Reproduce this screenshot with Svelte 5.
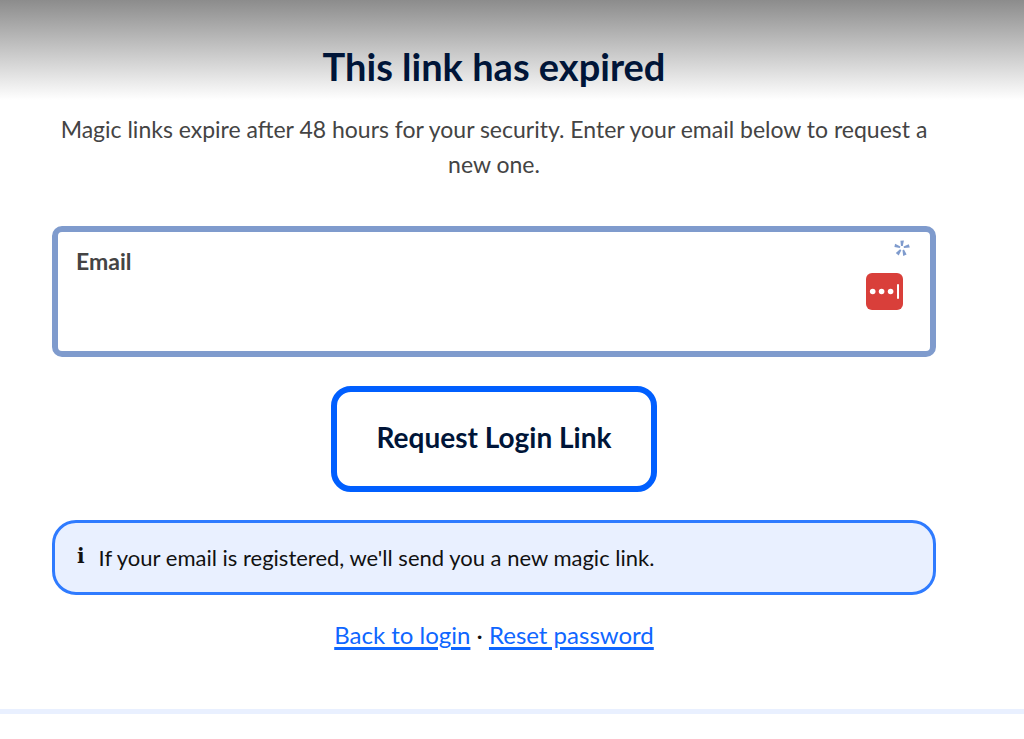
<script>
  let email = $state('');
</script>

<div class="page">
  <main>
    <h1>This link has expired</h1>
    <p class="intro">
      Magic links expire after 48 hours for your security. Enter your email below to request a new one.
    </p>

    <form onsubmit={(event) => event.preventDefault()}>
      <div class="field">
        <div class="entry">
          <label for="email">Email</label>
          <input id="email" type="email" autocomplete="email" required bind:value={email} />
        </div>
        <div class="marks">
          <svg class="required" viewBox="0 0 16 16" aria-hidden="true">
            <path d="M6.4 0.8 9.9 0.4 8.8 6 7 6Z" />
            <path d="M14.8 4.2 15.8 7.5 10 7.9 9.5 6.5Z" />
            <path d="M12.6 14.6 9.2 15.9 8.5 10.2 10 9.4Z" />
            <path d="M4.7 15.5 1.8 13.1 6 9.3 7.3 10.2Z" />
            <path d="M0.4 7.1 1.1 3.7 6.4 6.5 5.9 8Z" />
          </svg>
          <svg class="vault" viewBox="0 0 37 37" aria-hidden="true">
            <rect width="37" height="37" rx="6" fill="#d93f3a" />
            <circle cx="6.7" cy="18.5" r="2.8" fill="#fff" />
            <circle cx="15.6" cy="18.5" r="2.8" fill="#fff" />
            <circle cx="24.6" cy="18.5" r="2.8" fill="#fff" />
            <rect x="31" y="11" width="2" height="15" rx="1" fill="#fff" />
          </svg>
        </div>
      </div>
      <button type="submit">Request Login Link</button>
    </form>

    <div class="notice" role="status">
      <span class="info" aria-hidden="true">i</span>
      <span>If your email is registered, we'll send you a new magic link.</span>
    </div>

    <nav>
      <a href="#login">Back to login</a> · <a href="#reset">Reset password</a>
    </nav>
  </main>
</div>

<style>
  :global(body) {
    margin: 0;
    background: #fff;
  }

  .page {
    font-family: Lato, 'Open Sans', sans-serif;
    font-size: 24px;
    line-height: 35px;
    color: #111;
    background: linear-gradient(#8c8c8c, #fff 100px);
    border-bottom: 5px solid #e9f0ff;
  }

  main {
    display: flex;
    flex-direction: column;
    padding: 42px 88px 57px 52px;
  }

  h1 {
    margin: 0 0 22px;
    font-size: 38px;
    line-height: 48px;
    text-align: center;
    color: #001538;
  }

  .intro {
    margin: 0 0 44px;
    font-size: 23px;
    text-align: center;
    color: #444;
  }

  form {
    display: flex;
    flex-direction: column;
    align-items: center;
    gap: 29px;
    margin-bottom: 28px;
  }

  .field {
    box-sizing: border-box;
    display: flex;
    align-self: stretch;
    min-height: 131px;
    padding: 12px 20px 12px 18px;
    border: 6px solid #7f9bcd;
    border-radius: 10px;
    background: #fff;
  }

  .entry {
    flex: 1;
    display: flex;
    flex-direction: column;
  }

  label {
    font-size: 23px;
    font-weight: 700;
    color: #444;
  }

  input {
    flex: 1;
    min-width: 0;
    padding: 0;
    border: 0;
    outline: 0;
    background: none;
    font: inherit;
    color: inherit;
  }

  .marks {
    display: flex;
    flex-direction: column;
    align-items: flex-start;
    width: 44px;
    gap: 17px;
    margin-top: -4px;
  }

  .required {
    align-self: flex-end;
    width: 16px;
    height: 16px;
    fill: #7f9bcd;
  }

  .vault {
    width: 37px;
    height: 37px;
  }

  button {
    padding: 30px 40px 34px;
    border: 6px solid #005fff;
    border-radius: 20px;
    background: #fff;
    font: 700 28px/30px Lato, 'Open Sans', sans-serif;
    color: #001538;
  }

  .notice {
    display: flex;
    align-items: center;
    gap: 14px;
    margin-bottom: 22px;
    padding: 17px 22px;
    border: 3px solid #2f7bff;
    border-radius: 24px;
    background: #e9f0ff;
    font-size: 22px;
  }

  .info {
    padding-bottom: 4px;
    font-family: 'DejaVu Serif', serif;
    font-size: 20px;
    line-height: 30px;
    font-weight: 700;
  }

  nav {
    text-align: center;
  }

  a {
    color: #0f66ff;
    text-decoration-thickness: 3px;
    text-underline-offset: 3px;
  }
</style>
